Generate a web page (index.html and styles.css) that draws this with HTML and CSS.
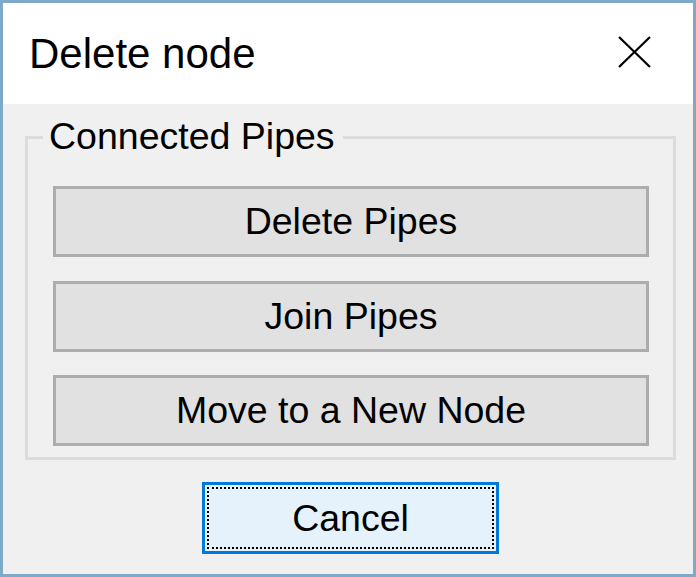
FILE: index.html
```html
<!DOCTYPE html>
<html>
<head>
<meta charset="utf-8">
<link rel="stylesheet" href="styles.css">
</head>
<body>
<div class="window">
  <div class="titlebar">
    <span class="title">Delete node</span>
    <svg class="close" width="33" height="32" viewBox="0 0 33 32">
      <path d="M1 1 L32 31 M32 1 L1 31" stroke="#000" stroke-width="2.2" fill="none"/>
    </svg>
  </div>
  <div class="content">
    <div class="group">
      <span class="group-label">Connected Pipes</span>
      <div class="btn">Delete Pipes</div>
      <div class="btn">Join Pipes</div>
      <div class="btn">Move to a New Node</div>
    </div>
    <div class="actions">
      <div class="cancel"><span class="focus">Cancel</span></div>
    </div>
  </div>
</div>
</body>
</html>
```
FILE: styles.css
```css
html, body {
  margin: 0;
  padding: 0;
}
body {
  font-family: "Liberation Sans", Arial, sans-serif;
  color: #000;
  background: #f0f0f0;
}
.window {
  box-sizing: border-box;
  width: 696px;
  height: 577px;
  border: 3px solid #7ea9c8;
  background: #f0f0f0;
  display: flex;
  flex-direction: column;
}
.titlebar {
  height: 101px;
  background: #fff;
  display: flex;
  align-items: center;
  justify-content: space-between;
  padding: 0 42px 0 26px;
  flex-shrink: 0;
}
.title {
  font-size: 42px;
  line-height: 48px;
  padding-top: 1px;
}
.close {
  display: block;
  margin-top: -3px;
}
.content {
  flex: 1;
  display: flex;
  flex-direction: column;
  padding: 32px 17px 0 22px;
}
.group {
  position: relative;
  border: 3px solid #dcdcdc;
  padding: 47px 24px 11px 25px;
  display: flex;
  flex-direction: column;
  gap: 23.5px;
}
.group-label {
  position: absolute;
  left: 15px;
  top: -24.5px;
  font-size: 37.5px;
  line-height: 43px;
  padding: 0 8px 0 6px;
  background: #f0f0f0;
}
.btn {
  box-sizing: border-box;
  height: 71px;
  border: 3px solid #adadad;
  background: #e1e1e1;
  display: flex;
  align-items: center;
  justify-content: center;
  font-size: 37.5px;
}
.actions {
  margin-top: 22px;
  display: flex;
  justify-content: center;
}
.cancel {
  box-sizing: border-box;
  width: 297px;
  height: 72px;
  border: 3px solid #0078d7;
  background: #e5f1fb;
  padding: 2px;
}
.focus {
  box-sizing: border-box;
  height: 100%;
  border: 2px dotted #000;
  display: flex;
  align-items: center;
  justify-content: center;
  font-size: 37.5px;
}
```
